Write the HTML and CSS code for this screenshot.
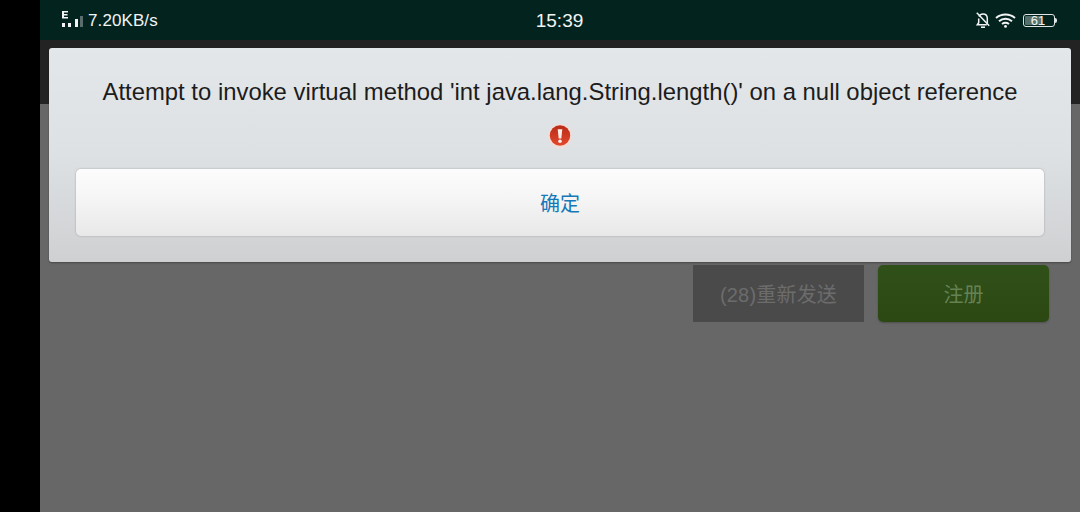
FILE: index.html
```html
<!DOCTYPE html>
<html lang="zh">
<head>
    <meta charset="UTF-8">
    <title>注册</title>
    <link rel="stylesheet" href="styles.css">
</head>
<body>
    <div class="screen">
        <div class="status-bar">
            <div class="status-left">
                <svg class="signal" width="22" height="18" viewBox="0 0 22 18">
                    <path d="M1 0h6v1.500H3v1.500h3.500v1.500H3V6h4v1.500H1z" fill="#f2f5f4"/>
                    <rect x="1" y="12" width="3" height="4" fill="#f2f5f4"/>
                    <rect x="7" y="12" width="3" height="4" fill="#f2f5f4"/>
                    <rect x="14" y="8" width="3" height="8" fill="#f2f5f4"/>
                    <rect x="19" y="5" width="3" height="11" fill="#5b6c6c"/>
                </svg>
                <span class="speed">7.20KB/s</span>
            </div>
            <div class="status-time">15:39</div>
            <div class="status-right">
                <svg width="14" height="16" viewBox="0 0 14 16" fill="none" stroke="#f2f5f4" stroke-width="1.500">
                    <path d="M3 4.500C3.600 3 5 2 7 2c2.800 0 4.300 2 4.300 4.500v5"/>
                    <path d="M2.700 6.500v4.300L1.300 12.800h9.500"/>
                    <path d="M5 15.200h4" stroke-width="1.600"/>
                    <path d="M.8 .8l12.400 13"/>
                </svg>
                <svg width="21" height="15" viewBox="0 0 21 15" fill="none" stroke="#f2f5f4" stroke-width="2">
                    <path d="M1 5C6.500.4 14.500.4 20 5"/>
                    <path d="M4 8.200c3.800-3.200 9.200-3.200 13 0"/>
                    <path d="M7 11c2.100-1.500 4.900-1.500 7 0"/>
                    <circle cx="10.500" cy="13.400" r="1.400" fill="#f2f5f4" stroke="none"/>
                </svg>
                <div class="battery">
                    <div class="battery-body">
                        <div class="battery-level"></div>
                        <span class="battery-num">61</span>
                    </div>
                    <div class="battery-tip"></div>
                </div>
            </div>
        </div>

        <div class="top-band"></div>

        <div class="form-actions">
            <button class="btn-resend">(28)重新发送</button>
            <button class="btn-register">注册</button>
        </div>

        <!-- 错误弹窗 -->
        <div class="dialog">
            <p class="dialog-msg">Attempt to invoke virtual method 'int java.lang.String.length()' on a null object reference</p>
            <div class="dialog-icon">
                <svg width="24" height="24" viewBox="0 0 24 24">
                    <defs>
                        <linearGradient id="redball" x1="0" y1="0" x2="0" y2="1">
                            <stop offset="0" stop-color="#b92c18"/>
                            <stop offset="1" stop-color="#e2472c"/>
                        </linearGradient>
                    </defs>
                    <circle cx="12" cy="12" r="12" fill="#f3dcd5"/>
                    <circle cx="12" cy="11.500" r="10.200" fill="url(#redball)"/>
                    <path d="M9.700 5.200h4.600L13.300 14.500h-2.600z" fill="#fbeeea"/>
                    <circle cx="12" cy="17.300" r="1.800" fill="#fbeeea"/>
                </svg>
            </div>
            <button class="dialog-btn">确定</button>
        </div>
    </div>
</body>
</html>
```

FILE: styles.css
```css
* {
    box-sizing: border-box;
}

body {
    margin: 0;
    background-color: #000;
    font-family: "Liberation Sans", "Noto Sans CJK SC", sans-serif;
}

.screen {
    position: relative;
    width: 1040px;
    height: 512px;
    margin-left: 40px;
    background-color: #676767;
    overflow: hidden;
}

.status-bar {
    display: grid;
    grid-template-columns: 1fr auto 1fr;
    align-items: center;
    height: 40px;
    padding: 0 23px 0 21px;
    background-color: #03231f;
    color: #f2f5f4;
}

.status-left {
    display: flex;
    align-items: center;
    gap: 5px;
    font-size: 17px;
}

.speed {
    padding-top: 2px;
    letter-spacing: 0.1px;
}

.status-time {
    margin-left: 1px;
    padding-top: 2px;
    font-size: 19px;
}

.status-right {
    display: flex;
    align-items: center;
    justify-content: flex-end;
    gap: 5px;
}

.battery {
    display: flex;
    align-items: center;
    margin-left: 2px;
}

.battery-body {
    position: relative;
    width: 32px;
    height: 13px;
    padding: 1px;
    border: 1px solid #dfe5e4;
    border-radius: 3px;
}

.battery-level {
    width: 62%;
    height: 100%;
    background-color: #56706c;
    border-radius: 1px;
}

.battery-num {
    position: absolute;
    top: -1px;
    left: 0;
    width: 100%;
    padding-right: 2px;
    font-size: 13px;
    line-height: 13px;
    text-align: center;
}

.battery-tip {
    width: 2px;
    height: 5px;
    background-color: #dfe5e4;
    border-radius: 0 2px 2px 0;
}

.top-band {
    height: 64px;
    background-color: #232323;
}

.form-actions {
    display: flex;
    justify-content: flex-end;
    gap: 14px;
    padding: 161px 31px 0 0;
}

.form-actions button {
    width: 171px;
    height: 57px;
    border: 0;
    font-family: inherit;
    font-size: 20px;
}

.btn-resend {
    background-color: #4a4a4a;
    color: #6c6c6c;
    letter-spacing: 0.2px;
}

.btn-register {
    background: linear-gradient(#30501a, #2c4812);
    color: #668253;
    border-radius: 5px;
    box-shadow: 0 1px 2px rgba(0, 0, 0, 0.25);
}

.dialog {
    position: absolute;
    top: 48px;
    left: 9px;
    width: 1022px;
    height: 214px;
    padding: 28px 27px 0;
    background: linear-gradient(#e4e7ea, #dde1e4 50%, #cfd0d2);
    border-radius: 3px;
    box-shadow: 0 1px 2px rgba(0, 0, 0, 0.3);
    text-align: center;
}

.dialog-msg {
    margin: 0;
    font-size: 23.87px;
    line-height: 32px;
    color: #1c1c1c;
}

.dialog-icon {
    display: flex;
    justify-content: center;
    margin-top: 16px;
    height: 24px;
}

.dialog-btn {
    display: block;
    width: 968px;
    height: 67px;
    margin-top: 21px;
    border: 0;
    border-radius: 5px;
    background: linear-gradient(#fcfcfc, #f6f6f6 40%, #e8e8e8);
    box-shadow: 0 0 2px rgba(110, 110, 110, 0.6);
    font-family: inherit;
    font-size: 20px;
    color: #1578b8;
}
```
